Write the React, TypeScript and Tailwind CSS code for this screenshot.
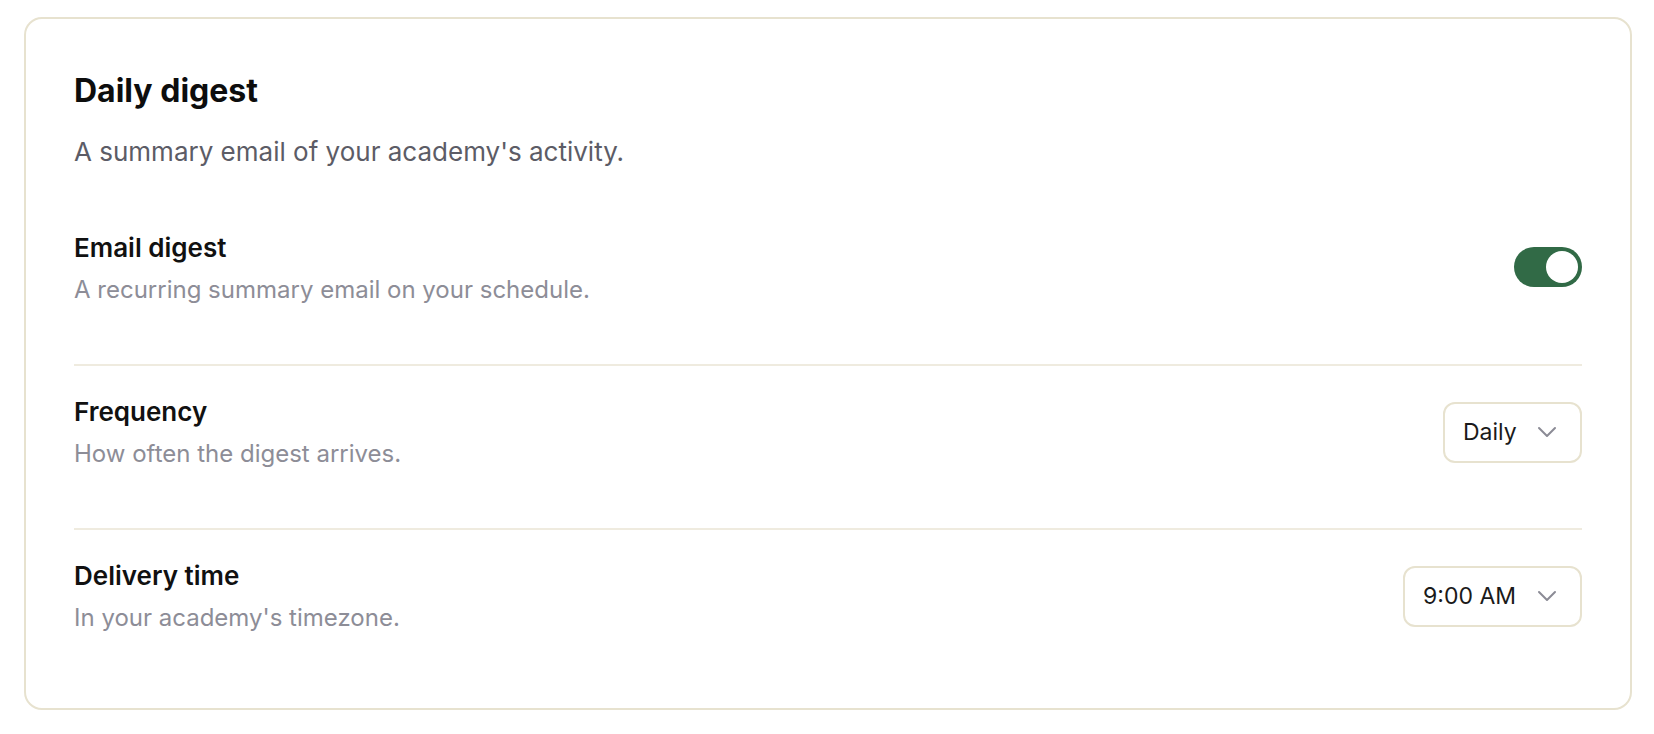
import { useState } from 'react'

type Option = { value: string; label: string }

const FREQUENCIES: Option[] = [
  { value: 'daily', label: 'Daily' },
  { value: 'weekly', label: 'Weekly' },
]

function Chevron() {
  return (
    <svg width="20" height="12" viewBox="0 0 20 12" fill="none" className="shrink-0">
      <path d="M2 2 L10 10 L18 2" stroke="#8b8b95" strokeWidth="2" strokeLinecap="round" strokeLinejoin="round" />
    </svg>
  )
}

function Toggle({ on, onChange }: { on: boolean; onChange: (v: boolean) => void }) {
  return (
    <button
      onClick={() => onChange(!on)}
      className={`mb-[4px] flex h-[40px] w-[68px] shrink-0 items-center rounded-full px-[4px] ${
        on ? 'justify-end bg-[#316a46]' : 'justify-start bg-[#d9d6cc]'
      }`}
    >
      <span className="h-[32px] w-[32px] rounded-full bg-white" />
    </button>
  )
}

function SelectBox({ value, width }: { value: string; width: string }) {
  return (
    <div
      className={`mb-[2px] flex h-[61px] shrink-0 items-center rounded-[12px] border-2 border-[#e7e2cf] bg-white pl-[18px] pr-[23px] ${width}`}
    >
      <span className="text-[23px] leading-none text-[#1a1a1a]">{value}</span>
      <span className="ml-auto">
        <Chevron />
      </span>
    </div>
  )
}

function Row({ title, desc, children, divider, last }: {
  title: string; desc: string; children: React.ReactNode; divider?: boolean; last?: boolean
}) {
  return (
    <div className={`flex items-center justify-between ${divider ? 'border-t-2 border-[#efebdf] pt-[31px]' : ''} ${last ? 'pb-[27px]' : 'pb-[59px]'}`}>
      <div>
        <p className="text-[26px] font-semibold leading-[30px] text-[#111111]">{title}</p>
        <p className="mt-[12px] text-[24px] leading-[30px] text-[#8d8d97]">{desc}</p>
      </div>
      {children}
    </div>
  )
}

export default function App() {
  const [enabled, setEnabled] = useState(true)
  const [freq] = useState('daily')

  return (
    <div className="min-h-screen bg-white pl-[24px] pr-[22px] pt-[17px] font-['Inter',sans-serif]">
      <div className="rounded-[18px] border-2 border-[#e7e2cf] bg-white px-[48px] pt-[49px] pb-[48px]">
        <h2 className="text-[32px] font-bold leading-[45px] text-[#0d0d0d]">Daily digest</h2>
        <p className="mt-[21px] text-[26px] leading-[36px] text-[#5c5c66]">
          A summary email of your academy's activity.
        </p>

        <div className="mt-[63px]">
          <Row title="Email digest" desc="A recurring summary email on your schedule.">
            <Toggle on={enabled} onChange={setEnabled} />
          </Row>
          <Row title="Frequency" desc="How often the digest arrives." divider>
            <SelectBox value={FREQUENCIES.find(f => f.value === freq)!.label} width="w-[139px]" />
          </Row>
          <Row title="Delivery time" desc="In your academy's timezone." divider last>
            <SelectBox value="9:00 AM" width="w-[179px]" />
          </Row>
        </div>
      </div>
    </div>
  )
}
